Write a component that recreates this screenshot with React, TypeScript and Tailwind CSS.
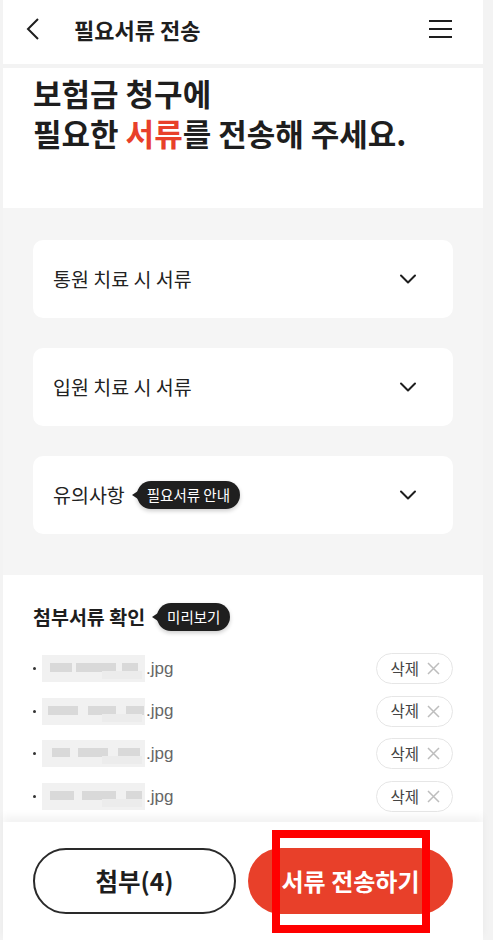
import React from "react";

const font = { fontFamily: '"Noto Sans CJK KR", "Noto Sans", sans-serif' };

function Chevron() {
  return (
    <svg width="18" height="10" viewBox="0 0 18 10" fill="none">
      <path d="M2 1.5 L9 8.5 L16 1.5" stroke="#1e1e1e" strokeWidth="2" strokeLinecap="round" strokeLinejoin="round" />
    </svg>
  );
}

function Pill({ text }: { text: string }) {
  return (
    <div className="relative ml-[12px] flex h-[28px] items-center rounded-full bg-[#1f1f1f] px-[10px] text-[14.5px] text-white shadow-[0_2px_4px_rgba(0,0,0,0.2)]">
      <span className="absolute left-[-5px] top-1/2 h-0 w-0 -translate-y-1/2 border-y-[4px] border-r-[6px] border-y-transparent border-r-[#1f1f1f]" />
      {text}
    </div>
  );
}

function Card({ children }: { children: React.ReactNode }) {
  return (
    <div className="flex h-[78px] items-center justify-between rounded-[10px] bg-white pl-[20px] pr-[36px]">
      <div className="flex items-center text-[19.5px] text-[#222]">{children}</div>
      <Chevron />
    </div>
  );
}

function Blur({ v }: { v: number }) {
  const blocks = [
    [[8, 22], [34, 40], [80, 16]],
    [[6, 30], [46, 28], [84, 18]],
    [[10, 18], [36, 30], [76, 22]],
    [[8, 24], [40, 34], [84, 16]],
  ][v];
  return (
    <div className="relative h-[27px] w-[103px] bg-[#f1f1f1] blur-[0.6px]">
      {blocks.map(([l, w], i) => (
        <div
          key={i}
          className="absolute top-[8px] h-[9px] bg-[#d9d9d9]"
          style={{ left: l, width: w }}
        />
      ))}
      <div className="absolute left-[60px] top-[16px] h-[8px] w-[40px] bg-[#ececec]" />
    </div>
  );
}

function FileRow({ v }: { v: number }) {
  return (
    <div className="flex h-[42.7px] items-center justify-between">
      <div className="flex items-center">
        <span className="mr-[6px] h-[3px] w-[3px] rounded-full bg-[#333]" />
        <Blur v={v} />
        <span className="ml-[1px] text-[17px] text-[#666]" style={{ fontFamily: '"Liberation Sans", "Noto Sans CJK KR", sans-serif' }}>.jpg</span>
      </div>
      <div className="flex h-[31px] items-center gap-[8px] rounded-full border border-[#e6e6e6] bg-white pl-[13px] pr-[12px] text-[15.5px] text-[#444]">
        <span>삭제</span>
        <svg width="13" height="13" viewBox="0 0 13 13">
          <path d="M1 1 L12 12 M12 1 L1 12" stroke="#bdbdbd" strokeWidth="1.5" />
        </svg>
      </div>
    </div>
  );
}

export default function App() {
  return (
    <div className="flex h-[940px] w-[493px] overflow-hidden bg-[#f3f3f3]" style={font}>
      <div className="relative ml-[3px] flex h-[940px] w-[480px] flex-col bg-white">
        <div className="flex-1 overflow-hidden">
          {/* header */}
          <div className="flex h-[68px] items-center border-b-[4px] border-[#f3f3f3] pb-[6px] pl-[22px] pr-[31px]">
            <svg width="16" height="24" viewBox="0 0 16 24" fill="none">
              <path d="M13 2 L3 12 L13 22" stroke="#1e1e1e" strokeWidth="2" strokeLinejoin="miter" />
            </svg>
            <div className="ml-[33px] flex-1 text-[22px] font-bold text-[#1e1e1e]">필요서류 전송</div>
            <svg width="23" height="20" viewBox="0 0 23 20" fill="none">
              <path d="M0 2 H23 M0 10 H23 M0 18 H23" stroke="#1e1e1e" strokeWidth="2" />
            </svg>
          </div>
          {/* heading */}
          <div className="h-[140px] px-[30px] pt-[5px] text-[31px] font-bold leading-[40px] text-[#1e1e1e]">
            보험금 청구에
            <br />
            필요한 <span className="text-[#e8402a]">서류</span>를 전송해 주세요.
          </div>
          {/* gray section */}
          <div className="flex h-[367px] flex-col gap-[30px] bg-[#f5f5f5] px-[30px] pt-[32px]">
            <Card>통원 치료 시 서류</Card>
            <Card>입원 치료 시 서류</Card>
            <Card>
              <span>유의사항</span>
              <Pill text="필요서류 안내" />
            </Card>
          </div>
          {/* attachments */}
          <div className="px-[30px] pt-[28px]">
            <div className="flex h-[28px] items-center">
              <span className="text-[19.5px] font-bold text-[#1e1e1e]">첨부서류 확인</span>
              <Pill text="미리보기" />
            </div>
            <div className="mt-[16px]">
              <FileRow v={0} />
              <FileRow v={1} />
              <FileRow v={2} />
              <FileRow v={3} />
            </div>
          </div>
        </div>
        {/* bottom bar */}
        <div className="relative z-10 flex h-[118px] shrink-0 gap-[12px] bg-white px-[30px] pt-[26px] shadow-[0_-6px_8px_rgba(0,0,0,0.05)]">
          <div className="flex h-[66px] w-[203px] items-center justify-center rounded-full border-2 border-[#2a2a2a] text-[24.5px] font-bold text-[#1e1e1e]">
            첨부(4)
          </div>
          <div className="flex h-[66px] flex-1 items-center justify-center rounded-full bg-[#e8402a] text-[24px] font-bold text-white">
            서류 전송하기
          </div>
          <div className="absolute left-[269px] top-[8px] h-[103px] w-[158px] border-[8px] border-[#ff0000]" />
        </div>
      </div>
    </div>
  );
}
